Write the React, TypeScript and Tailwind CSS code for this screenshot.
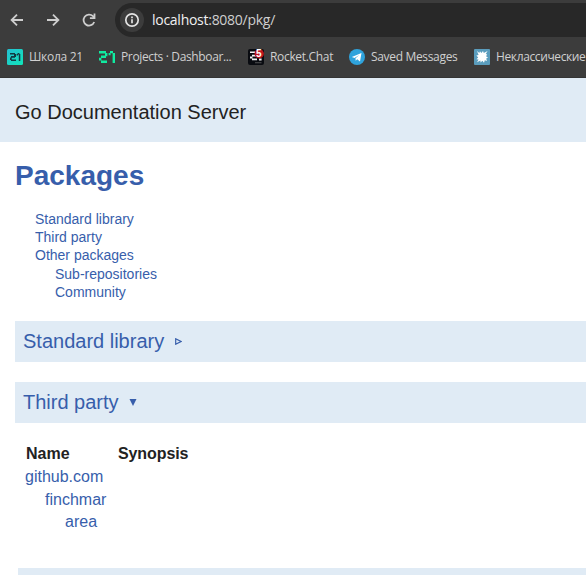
import type { ReactNode } from "react";

const stroke = { fill: "none", stroke: "#cecece", strokeWidth: 1.8 };

function BackIcon() {
  return (
    <svg width="16" height="16" viewBox="0 0 16 16" {...stroke}>
      <path d="M14 8H3M8 2.6L2.6 8L8 13.4" />
    </svg>
  );
}

function ForwardIcon() {
  return (
    <svg width="16" height="16" viewBox="0 0 16 16" {...stroke}>
      <path d="M2 8H13M8 2.6L13.4 8L8 13.4" />
    </svg>
  );
}

function ReloadIcon() {
  return (
    <svg width="16" height="16" viewBox="0 0 16 16" {...stroke}>
      <path d="M13.2 10A5.5 5.5 0 1 1 12 4.2L13.4 5.8" />
      <path d="M13.5 1.6V6.2H8.9" />
    </svg>
  );
}

function InfoIcon() {
  return (
    <svg width="16" height="16" viewBox="0 0 16 16" fill="none" stroke="#e3e3e3" strokeWidth="1.7">
      <circle cx="8" cy="8" r="6.2" />
      <path d="M8 7.2V11.2M8 4.6V6.2" />
    </svg>
  );
}

function SchoolIcon() {
  return (
    <svg width="16" height="16" viewBox="0 0 16 16">
      <defs>
        <linearGradient id="school" x1="0" y1="0" x2="1" y2="1">
          <stop offset="0" stopColor="#25bfd2" />
          <stop offset="1" stopColor="#10e5b8" />
        </linearGradient>
      </defs>
      <rect width="16" height="16" rx="1.5" fill="url(#school)" />
      <path
        fill="#123b43"
        d="M3 4H8V5.6H3ZM7 5H9V8H7ZM4 7H8V8.7H4ZM3 8.5H4.7V11H3ZM4 10.4H9V12H4ZM9.6 5H11V6.6H9.6ZM10.6 4H12.4V5.6H10.6ZM11.8 5H13.3V12H11.8Z"
      />
    </svg>
  );
}

function ProjectsIcon() {
  return (
    <svg width="16" height="16" viewBox="0 0 16 16">
      <path
        fill="#10eba0"
        d="M0 2H7V4.4H0ZM6 4H8.4V7.2H6ZM2 6.6H7V9H2ZM0 8.8H2.4V11.6H0ZM2 11.4H8V14H2ZM9.6 4H11.6V6.2H9.6ZM11 2H14V4.2H11ZM13.6 4H16V14H13.6Z"
      />
    </svg>
  );
}

function RocketIcon() {
  return (
    <span className="relative block size-4">
      <svg width="16" height="16" viewBox="0 0 16 16">
        <rect width="16" height="16" rx="2" fill="#090b10" />
        <path fill="#f4f4f4" d="M2 2.5H7V4H2ZM4 5.8H8V7.4H4ZM2 7.4H4.4V9.4H2ZM4 9.4H9V11.2H4ZM11 9.6H13.6V11.6H11Z" />
        <path fill="#666" d="M7 13.4H13.5V14.2H7Z" />
        <circle cx="11.2" cy="4.8" r="4.7" fill="#bf171d" />
      </svg>
      <span className="absolute left-[8px] top-0 font-['Liberation_Sans',sans-serif] text-[10px] font-bold leading-[10px] tracking-normal text-white">
        5
      </span>
    </span>
  );
}

function TelegramIcon() {
  return (
    <svg width="16" height="16" viewBox="0 0 16 16">
      <circle cx="8" cy="8" r="8" fill="#2fa3dc" />
      <path fill="#fff" d="M2.8 7.9L12.5 4.1L11 12.4L8.2 10.3L6.7 11.7L6.5 9.2L10.3 6L5.5 9Z" />
    </svg>
  );
}

function BurstIcon() {
  return (
    <svg width="16" height="16" viewBox="0 0 16 16">
      <rect width="16" height="16" rx="1" fill="#5b9dbd" />
      <path
        fill="#fff"
        d="M3 2L5.3 4L6 2.2L7.4 4L9 2L9.8 4L13.6 2L11.8 5L13.2 5.6L12 7.2L14 8.5L12.2 9.4L13 12L10.8 11.3L10 13.8L8.4 11.8L6.6 13.4L6.4 11.6L3 13.2L4.6 10.4L2.4 10.2L4.2 8.4L2.4 6.4L4.6 6Z"
      />
    </svg>
  );
}

function Bookmark({ icon, className, children }: { icon: ReactNode; className: string; children: ReactNode }) {
  return (
    <div className={`flex shrink-0 items-center gap-1.5 ${className}`}>
      <span className="size-4 shrink-0">{icon}</span>
      <span className="whitespace-nowrap leading-4">{children}</span>
    </div>
  );
}

function Browser() {
  return (
    <header className="h-[78px] overflow-hidden border-b border-[#343434] bg-[#3c3c3c] font-['Open_Sans','Noto_Sans',sans-serif]">
      <div className="flex h-10 items-center">
        <div className="flex w-[115px] shrink-0 gap-5 pl-[9px]">
          <BackIcon />
          <ForwardIcon />
          <ReloadIcon />
        </div>
        <div className="-mr-8 flex h-[34px] grow items-center rounded-full bg-[#282828] pl-[5px]">
          <span className="flex size-6 items-center justify-center rounded-full bg-[#3c3c3c]">
            <InfoIcon />
          </span>
          <span className="ml-2 text-[14px] leading-5 tracking-[-0.27px] text-[#cfcfcf]">
            <span className="text-[#f0f0f0]">localhost</span>:8080/pkg/
          </span>
        </div>
      </div>
      <nav className="flex h-[34px] items-center pl-[7px] text-[12px] text-[#d0d0d0]">
        <Bookmark icon={<SchoolIcon />} className="w-[92px] tracking-[-0.3px]">Школа 21</Bookmark>
        <Bookmark icon={<ProjectsIcon />} className="w-[149px] tracking-[-0.36px]">Projects · Dashboar...</Bookmark>
        <Bookmark icon={<RocketIcon />} className="w-[101px] tracking-[-0.33px]">Rocket.Chat</Bookmark>
        <Bookmark icon={<TelegramIcon />} className="w-[125px] tracking-[-0.33px]">Saved Messages</Bookmark>
        <Bookmark icon={<BurstIcon />} className="tracking-[-0.38px]">Неклассические</Bookmark>
      </nav>
    </header>
  );
}

function SectionTitle({ children }: { children: ReactNode }) {
  return (
    <h2 className="ml-[15px] flex h-[41px] items-center bg-[#e0ebf5] pb-0.5 pl-2 text-[20px] leading-6 text-[#375eab]">
      {children}
    </h2>
  );
}

export default function App() {
  return (
    <div className="h-[575px] overflow-hidden bg-white font-['Liberation_Sans',Arial,sans-serif] text-[#222]">
      <Browser />
      <div className="flex h-16 items-center bg-[#e0ebf5] pl-[15px] pt-1 text-[20px]">Go Documentation Server</div>
      <main>
        <h1 className="ml-[15px] mt-[18px] h-8 text-[28px] font-bold leading-8 text-[#375eab]">Packages</h1>
        <nav className="ml-[35px] mt-[18px] h-[92px] text-[14px] leading-[18.2px] text-[#375eab]">
          <div>Standard library</div>
          <div>Third party</div>
          <div>Other packages</div>
          <div className="pl-5">Sub-repositories</div>
          <div className="pl-5">Community</div>
        </nav>
        <div className="mt-[19px]">
          <SectionTitle>
            Standard library
            <svg className="ml-[11px] mt-0.5" width="7" height="7" viewBox="0 0 7 7">
              <path d="M.7 .8L6 3.5L.7 6.2Z" fill="none" stroke="#375eab" strokeWidth="1.2" />
            </svg>
          </SectionTitle>
        </div>
        <div className="mt-5">
          <SectionTitle>
            Third party
            <svg className="ml-[10px] mt-0.5" width="8" height="7" viewBox="0 0 8 7">
              <path d="M.5 0H7.5L4 7Z" fill="#375eab" />
            </svg>
          </SectionTitle>
        </div>
        <section className="ml-[25px] mt-5 h-[125px] text-[16px] leading-[22.5px] text-[#375eab]">
          <div className="flex pl-px font-bold text-[#222]">
            <span className="w-[92px]">Name</span>
            <span className="tracking-[-0.1px]">Synopsis</span>
          </div>
          <div className="h-[23px]">github.com</div>
          <div className="h-[22px] pl-5">finchmar</div>
          <div className="pl-10">area</div>
        </section>
        <div className="ml-[18px] h-[41px] bg-[#e0ebf5]" />
      </main>
    </div>
  );
}
